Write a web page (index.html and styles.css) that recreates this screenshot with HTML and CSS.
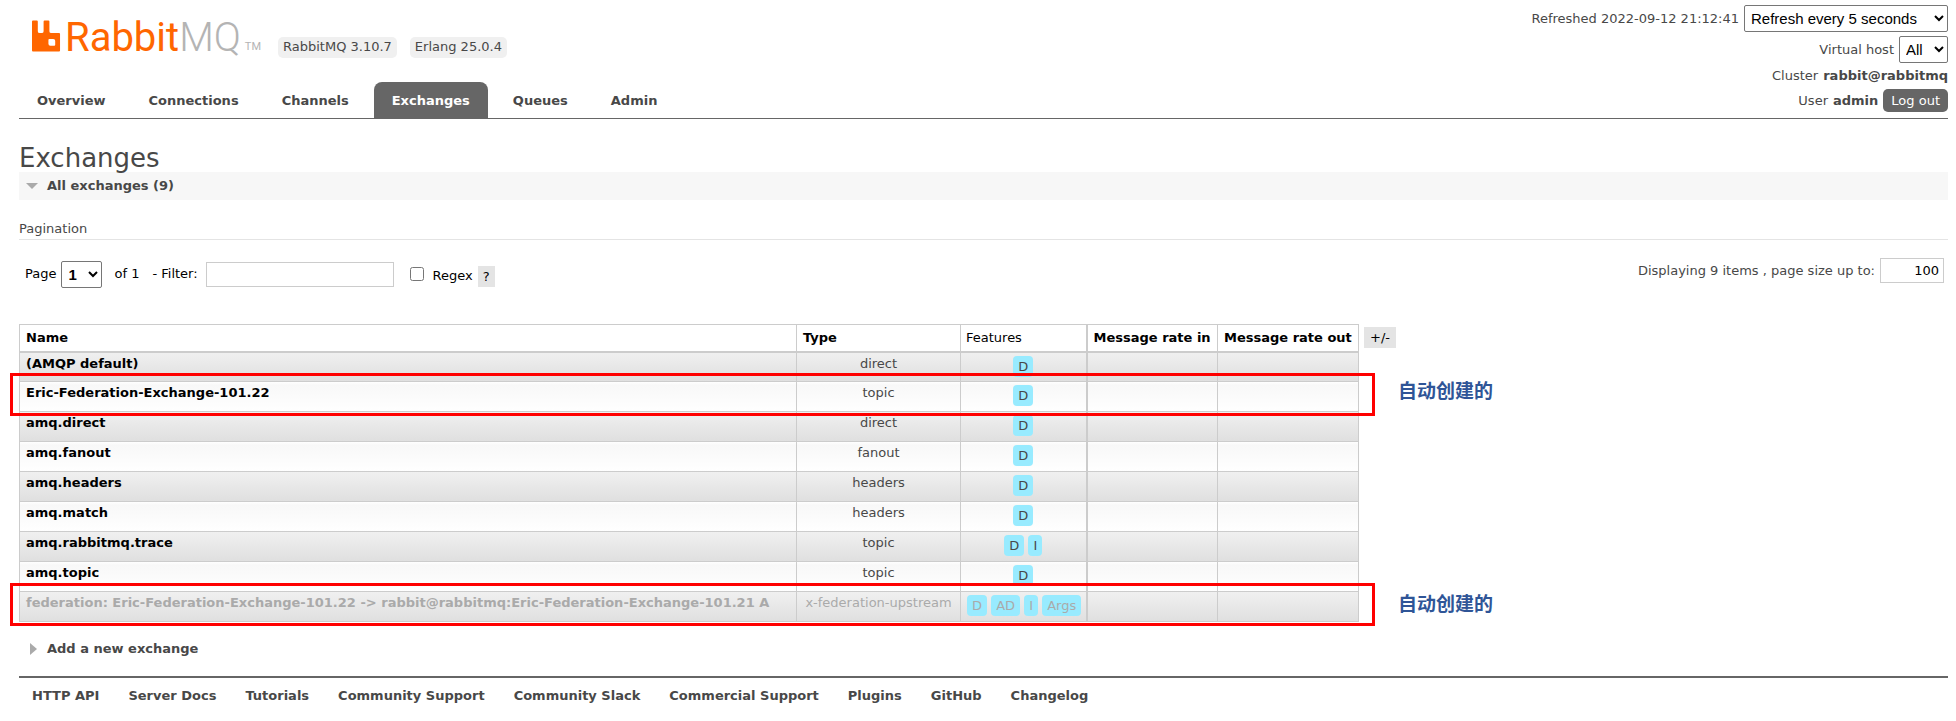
FILE: index.html
```html
<!DOCTYPE html>
<html lang="en">
<head>
<meta charset="utf-8">
<title>RabbitMQ Management</title>
<link rel="stylesheet" href="styles.css">
</head>
<body>
<header class="header">
  <div class="brand">
    <a class="logo" href="#" aria-label="RabbitMQ">
      <svg class="logo-mark" viewBox="0 0 30 32" aria-hidden="true"><path fill="#f60" fill-rule="evenodd" d="M1 0h4q1 0 1 1v10q0 2 2 2h2q2 0 2-2V1q0-1 1-1h4q1 0 1 1v10q0 2 2 2h8q1 0 1 1v17q0 1-1 1H1q-1 0-1-1V1q0-1 1-1zM18 19q-1 0-1 1v4q0 2 2 2h4q1 0 1-1v-4q0-2-2-2z"/></svg>
      <span class="logo-text">Rabbit<span class="logo-mq">MQ</span></span><span class="logo-tm">TM</span>
    </a>
    <span class="version">RabbitMQ 3.10.7</span>
    <span class="version">Erlang 25.0.4</span>
  </div>
  <div class="status">
    <div class="status-row"><label for="refresh">Refreshed 2022-09-12 21:12:41</label>
      <select id="refresh" class="select select-refresh"><option>Refresh every 5 seconds</option></select></div>
    <div class="status-row status-host"><label for="vhost">Virtual host</label>
      <select id="vhost" class="select select-host"><option>All</option></select></div>
    <div class="status-row status-cluster">Cluster <b>rabbit@rabbitmq</b></div>
    <div class="status-row">User <b>admin</b> <button class="logout">Log out</button></div>
  </div>
</header>
<nav class="tabs">
  <a class="tab" href="#">Overview</a>
  <a class="tab" href="#">Connections</a>
  <a class="tab" href="#">Channels</a>
  <a class="tab tab-selected" href="#">Exchanges</a>
  <a class="tab" href="#">Queues</a>
  <a class="tab" href="#">Admin</a>
</nav>
<main class="main">
  <h1 class="title">Exchanges</h1>
  <h2 class="section section-open"><svg class="arrow" viewBox="0 0 12 12" aria-hidden="true"><path fill="#aaa" d="M0 3h12L6 9z"/></svg>All exchanges (9)</h2>
  <h3 class="subhead">Pagination</h3>
  <div class="pager">
    <label for="page">Page</label>
    <select id="page" class="select select-page"><option>1</option></select>
    <span class="page-total">of 1</span>
    <label for="filter" class="filter-label">- Filter:</label>
    <input id="filter" class="filter" type="text">
    <input id="regex" class="regex" type="checkbox">
    <label for="regex" class="regex-label">Regex</label>
    <button class="help">?</button>
    <label for="size" class="size-label">Displaying 9 items , page size up to:</label>
    <input id="size" class="size" type="text" value="100">
  </div>
  <div class="listing">
    <div class="table-box">
      <table class="table">
        <colgroup><col class="c-name"><col class="c-type"><col class="c-features"><col class="c-in"><col class="c-out"></colgroup>
        <thead>
          <tr><th>Name</th><th>Type</th><th class="plain">Features</th><th class="rate">Message rate in</th><th>Message rate out</th></tr>
        </thead>
        <tbody>
          <tr><td><a href="#">(AMQP default)</a></td><td>direct</td><td><abbr>D</abbr></td><td class="rate"></td><td></td></tr>
          <tr><td><a href="#">Eric-Federation-Exchange-101.22</a></td><td>topic</td><td><abbr>D</abbr></td><td class="rate"></td><td></td></tr>
          <tr><td><a href="#">amq.direct</a></td><td>direct</td><td><abbr>D</abbr></td><td class="rate"></td><td></td></tr>
          <tr><td><a href="#">amq.fanout</a></td><td>fanout</td><td><abbr>D</abbr></td><td class="rate"></td><td></td></tr>
          <tr><td><a href="#">amq.headers</a></td><td>headers</td><td><abbr>D</abbr></td><td class="rate"></td><td></td></tr>
          <tr><td><a href="#">amq.match</a></td><td>headers</td><td><abbr>D</abbr></td><td class="rate"></td><td></td></tr>
          <tr><td><a href="#">amq.rabbitmq.trace</a></td><td>topic</td><td><abbr>D</abbr> <abbr>I</abbr></td><td class="rate"></td><td></td></tr>
          <tr><td><a href="#">amq.topic</a></td><td>topic</td><td><abbr>D</abbr></td><td class="rate"></td><td></td></tr>
          <tr class="internal"><td><a href="#">federation: Eric-Federation-Exchange-101.22 -&gt; rabbit@rabbitmq:Eric-Federation-Exchange-101.21 A</a></td><td>x-federation-upstream</td><td><abbr>D</abbr> <abbr>AD</abbr> <abbr>I</abbr> <abbr>Args</abbr></td><td class="rate"></td><td></td></tr>
        </tbody>
      </table>
      <div class="mark mark-first"><span class="note" lang="zh">自动创建的</span></div>
      <div class="mark mark-last"><span class="note" lang="zh">自动创建的</span></div>
    </div>
    <button class="help columns">+/-</button>
  </div>
  <h2 class="section"><svg class="arrow" viewBox="0 0 12 12" aria-hidden="true"><path fill="#aaa" d="M4 0v12l7-6z"/></svg>Add a new exchange</h2>
</main>
<footer class="footer">
  <a href="#">HTTP API</a>
  <a href="#">Server Docs</a>
  <a href="#">Tutorials</a>
  <a href="#">Community Support</a>
  <a href="#">Community Slack</a>
  <a href="#">Commercial Support</a>
  <a href="#">Plugins</a>
  <a href="#">GitHub</a>
  <a href="#">Changelog</a>
</footer>
</body>
</html>
```
FILE: styles.css
```css
* { box-sizing: border-box; }
body {
  margin: 0;
  padding: 0 8px 0 19px;
  background: #fff;
  color: #484848;
  font: 13px/16px Verdana, "DejaVu Sans", sans-serif;
}
a { color: inherit; text-decoration: none; }
input, select, button { margin: 0; font: inherit; }

.header { display: flex; justify-content: space-between; height: 82px; }
.brand { display: flex; align-items: flex-start; padding: 13px 0 0 13px; }
.logo { display: flex; align-items: flex-start; width: 246px; color: #f60; }
.logo-mark { width: 29px; height: 32px; margin: 7px 4px 0 0; }
.logo-text { font: 40px/50px Roboto, sans-serif; }
.logo-mq { color: #b4b4b4; font-weight: 300; }
.logo-tm { margin: 27px 0 0 4px; color: #b4b4b4; font: 11px/14px Roboto, sans-serif; }
.version {
  margin: 24px 13px 0 0;
  padding: 2px 5px 3px;
  border-radius: 5px;
  background: #f0f0f0;
}

.status { padding-top: 5px; }
.status-row { display: flex; justify-content: flex-end; align-items: center; gap: 5px; }
.status-host { margin-top: 4px; }
.status-cluster { margin: 5px 0; }
.select {
  height: 27px;
  padding: 0 2px;
  border: 1px solid #767676;
  border-radius: 2px;
  background: #fff;
  color: #000;
  font: 15px "Liberation Sans", sans-serif;
}
.select-refresh { width: 204px; }
.select-host { width: 49px; }
.select-page { width: 41px; font-weight: bold; }
.logout {
  height: 23px;
  padding: 0 8px;
  border: 0;
  border-radius: 5px;
  background: #666;
  color: #fff;
}

.tabs { display: flex; gap: 7px; border-bottom: 1px solid #666; }
.tab { padding: 11px 18px 9px; border-radius: 8px 8px 0 0; font-weight: bold; }
.tab-selected { background: #666; color: #fff; }

.title { margin: 25px 0 0; font-size: 26px; font-weight: normal; line-height: 28px; }
.section {
  display: flex;
  align-items: center;
  gap: 9px;
  margin: 0;
  padding: 6px 7px;
  font-size: 13px;
}
.section-open { background: #f7f7f7; }
.arrow { width: 12px; height: 12px; }
.subhead {
  margin: 21px 0 0;
  padding-bottom: 2px;
  border-bottom: 1px solid #e4e4e4;
  font-size: 13px;
  font-weight: normal;
}
.pager { display: flex; align-items: center; margin-top: 18px; padding: 0 4px 0 6px; color: #000; }
.select-page { margin: 0 12px 0 5px; }
.filter-label { margin: 0 8px 0 13px; }
.filter, .size {
  height: 25px;
  padding: 1px 4px;
  border: 1px solid #ccc;
}
.filter { width: 188px; }
.regex { width: 14px; height: 14px; margin: 0 9px 0 16px; }
.regex-label { margin: 3px 5px 0 0; }
.help {
  height: 21px;
  margin-top: 5px;
  padding: 0 5px;
  border: 0;
  background: #e4e4e4;
}
.size-label { margin: 0 5px 7px auto; color: #484848; }
.size { width: 64px; margin-bottom: 7px; text-align: right; }

.listing { display: flex; align-items: flex-start; margin-top: 34px; }
.table-box { position: relative; }
.table { width: 1340px; border-collapse: collapse; table-layout: fixed; }
.c-type { width: 164px; }
.c-features { width: 126px; }
.c-in { width: 131px; }
.c-out { width: 141px; }
.table th, .table td { border: 1px solid #ccc; padding: 3px 6px; vertical-align: top; white-space: nowrap; }
.table th { height: 27px; padding-top: 5px; border-bottom-width: 2px; color: #000; text-align: left; }
.table .plain { padding-left: 5px; font-weight: normal; }
.table .rate { border-left-width: 2px; }
.table td { height: 30px; text-align: center; }
.table td:first-child { color: #000; font-weight: bold; text-align: left; }
.table tbody tr { background: linear-gradient(#fff, #f8f8f8 10%, #fff); }
.table tbody tr:nth-child(odd) { background: linear-gradient(#f0f0f0, #dfdfdf); }
.table .internal td, .table .internal td:first-child { color: #aaa; }
abbr { display: inline-block; padding: 3px 5px 2px; border-radius: 4px; background: #98ebff; }
.columns { margin: 3px 0 0 5px; padding: 0 6px; }

.mark { position: absolute; left: -9px; right: -16px; height: 43px; border: 3px solid #f00; }
.mark-first { top: 49px; }
.mark-last { top: 259px; }
.note {
  position: absolute;
  left: 100%;
  top: 3px;
  margin-left: 26px;
  color: #2f5597;
  font: bold 19px/28px "Noto Sans CJK SC", sans-serif;
  white-space: nowrap;
}
.mark-first .note { top: 0; }

.main > .section:last-child { margin-top: 13px; }
.footer { display: flex; flex-wrap: wrap; gap: 29px; margin-top: 13px; padding: 10px 13px; border-top: 2px solid #666; font-weight: bold; }
```
